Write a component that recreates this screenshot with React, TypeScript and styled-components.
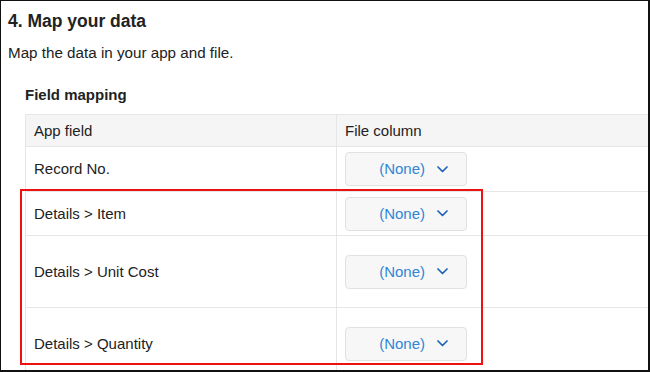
import React from "react";
import styled, { createGlobalStyle } from "styled-components";

const GlobalStyle = createGlobalStyle`
  html, body { margin: 0; padding: 0; background: #ffffff; }
  body { font-family: "Liberation Sans", Arial, Helvetica, sans-serif; color: #222222; }
  * { box-sizing: border-box; }
`;

const Frame = styled.div`
  position: relative;
  width: 650px;
  height: 372px;
  overflow: hidden;
  background: #ffffff;
  border-style: solid;
  border-color: #111111;
  border-width: 1px 2px 2px 1px;
  padding: 9px 0 0 7px;
  display: flex;
  flex-direction: column;
`;

const Title = styled.h2`
  margin: 0;
  font-size: 17.5px;
  line-height: 22px;
  font-weight: 700;
  color: #222222;
`;

const Lead = styled.p`
  margin: 11px 0 0 0;
  font-size: 15.2px;
  line-height: 20px;
  color: #222222;
`;

const Section = styled.section`
  margin-top: 22px;
  padding-left: 17px;
  display: flex;
  flex-direction: column;
`;

const SectionTitle = styled.h3`
  margin: 0;
  font-size: 15px;
  line-height: 20px;
  font-weight: 700;
  color: #222222;
`;

const Table = styled.div`
  margin-top: 9px;
  width: 680px;
  border-top: 1px solid #e6e6e6;
  border-left: 1px solid #e6e6e6;
  display: flex;
  flex-direction: column;
`;

const Row = styled.div<{ $h: number; $head?: boolean }>`
  display: grid;
  grid-template-columns: 311px 1fr;
  height: ${(p) => p.$h + 1}px;
  border-bottom: 1px solid #e6e6e6;
  background: ${(p) => (p.$head ? "#f5f5f5" : "#ffffff")};
`;

const Cell = styled.div<{ $first?: boolean }>`
  display: flex;
  align-items: center;
  padding-left: 8px;
  font-size: 15px;
  line-height: 20px;
  color: #222222;
  border-right: ${(p) => (p.$first ? "1px solid #e6e6e6" : "none")};
`;

const SelectBox = styled.div`
  width: 122px;
  height: 34px;
  display: flex;
  align-items: center;
  justify-content: flex-end;
  gap: 12px;
  padding-right: 18px;
  background: #f7f7f7;
  border: 1px solid #e1e1e1;
  border-radius: 4px;
`;

const SelectText = styled.span`
  font-size: 15px;
  line-height: 20px;
  color: #2f86d6;
`;

const Highlight = styled.div`
  position: absolute;
  left: 19px;
  top: 188px;
  width: 463px;
  height: 176px;
  border: 2px solid #ee1111;
  pointer-events: none;
`;

const Chevron = () => (
  <svg width="11" height="7" viewBox="0 0 11 7" fill="none">
    <path d="M1 1 L5.5 5.5 L10 1" stroke="#1f62b8" strokeWidth="1.7" strokeLinecap="round" strokeLinejoin="round" />
  </svg>
);

const Select = () => (
  <SelectBox>
    <SelectText>(None)</SelectText>
    <Chevron />
  </SelectBox>
);

const rows = [
  { label: "Record No.", h: 44 },
  { label: "Details > Item", h: 43 },
  { label: "Details > Unit Cost", h: 71 },
  { label: "Details > Quantity", h: 71 },
];

export default function App() {
  return (
    <>
      <GlobalStyle />
      <Frame>
        <Title>4. Map your data</Title>
        <Lead>Map the data in your app and file.</Lead>
        <Section>
          <SectionTitle>Field mapping</SectionTitle>
          <Table>
            <Row $h={31} $head>
              <Cell $first>App field</Cell>
              <Cell>File column</Cell>
            </Row>
            {rows.map((r) => (
              <Row key={r.label} $h={r.h}>
                <Cell $first>{r.label}</Cell>
                <Cell>
                  <Select />
                </Cell>
              </Row>
            ))}
          </Table>
        </Section>
        <Highlight />
      </Frame>
    </>
  );
}
